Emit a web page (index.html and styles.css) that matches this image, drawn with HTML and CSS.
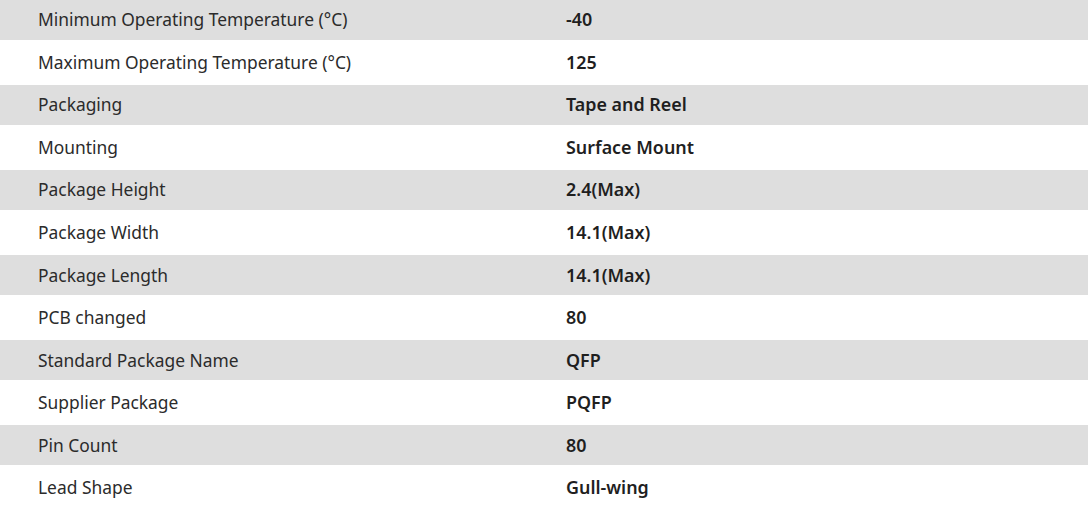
FILE: index.html
```html
<!DOCTYPE html>
<html>
<head>
<meta charset="utf-8">
<link rel="stylesheet" href="styles.css">
</head>
<body>
<div class="specs">
  <div class="row"><div class="label">Minimum Operating Temperature (°C)</div><div class="value">-40</div></div>
  <div class="row"><div class="label">Maximum Operating Temperature (°C)</div><div class="value">125</div></div>
  <div class="row"><div class="label">Packaging</div><div class="value">Tape and Reel</div></div>
  <div class="row"><div class="label">Mounting</div><div class="value">Surface Mount</div></div>
  <div class="row"><div class="label">Package Height</div><div class="value">2.4(Max)</div></div>
  <div class="row"><div class="label">Package Width</div><div class="value">14.1(Max)</div></div>
  <div class="row"><div class="label">Package Length</div><div class="value">14.1(Max)</div></div>
  <div class="row"><div class="label">PCB changed</div><div class="value">80</div></div>
  <div class="row"><div class="label">Standard Package Name</div><div class="value">QFP</div></div>
  <div class="row"><div class="label">Supplier Package</div><div class="value">PQFP</div></div>
  <div class="row"><div class="label">Pin Count</div><div class="value">80</div></div>
  <div class="row"><div class="label">Lead Shape</div><div class="value">Gull-wing</div></div>
</div>
</body>
</html>
```

FILE: styles.css
```css
html, body {
  margin: 0;
  padding: 0;
  background: #ffffff;
}
body {
  font-family: "Noto Sans", "Open Sans", sans-serif;
  font-size: 17.4px;
  color: #2b2b2b;
}
.specs {
  display: flex;
  flex-direction: column;
  width: 1088px;
}
.row {
  box-sizing: border-box;
  display: grid;
  grid-template-columns: 528px 1fr;
  align-items: center;
  padding-left: 38px;
  padding-bottom: 1px;
  height: 45.6px;
  background: #ffffff;
}
.row:nth-child(odd) {
  height: 39.5px;
  background: #dedede;
}
.label {
  white-space: nowrap;
}
.value {
  font-size: 17.9px;
  font-weight: 600;
  color: #1f1f1f;
  white-space: nowrap;
}
```
